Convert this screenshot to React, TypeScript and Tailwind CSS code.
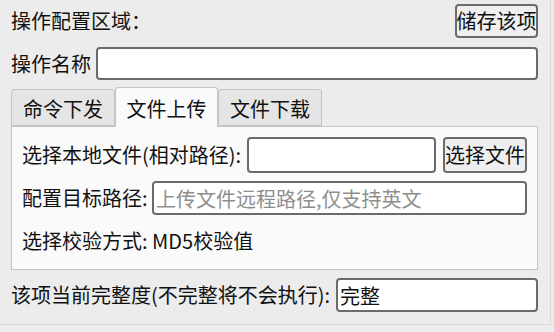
import { useState } from 'react'

const inputBase =
  'min-w-0 shrink-0 rounded-[4px] border-2 border-[#6b6b6b] bg-white px-[2px] text-[20px] text-[#111] outline-none placeholder:text-[#8e8e8e]'

const buttonBase =
  'flex shrink-0 items-center justify-center whitespace-nowrap rounded-[4px] border-2 border-[#6b6b6b] bg-[#efefef] text-[20px] leading-none text-[#111]'

const tabs = ['命令下发', '文件上传', '文件下载']

export default function App() {
  const [active, setActive] = useState(1)

  return (
    <div className="h-[332px] w-[554px] overflow-hidden whitespace-nowrap bg-[#ececec] font-['Noto_Sans_CJK_SC','Noto_Sans',sans-serif] text-[20px] text-[#111]">
      <div className="flex h-[325px] w-[551px] flex-col border-r border-b border-[#d8d8d8] pt-[4px] pr-[12px] pl-[11px]">
        <div className="flex h-[34px] items-center justify-between">
          <span className="leading-none">操作配置区域：</span>
          <button className={`${buttonBase} h-[34px] w-[83px]`}>储存该项</button>
        </div>

        <div className="mt-[9px] flex h-[33px] items-center justify-between">
          <span className="leading-none">操作名称</span>
          <input className={`${inputBase} h-[33px] w-[442px]`} />
        </div>

        <div className="mt-[7px] flex h-[39px] items-end">
          {tabs.map((tab, i) =>
            i === active ? (
              <button
                key={tab}
                onClick={() => setActive(i)}
                className="relative z-10 -mb-px flex h-[40px] w-[103px] items-center justify-center rounded-t-[3px] border border-b-0 border-[#c4c4c4] bg-[#fafafa] pt-[3px] leading-none"
              >
                {tab}
              </button>
            ) : (
              <button
                key={tab}
                onClick={() => setActive(i)}
                className="flex h-[37px] w-[104px] items-center justify-center rounded-t-[3px] border border-[#c4c4c4] bg-[#e5e5e5] pt-[3px] leading-none"
              >
                {tab}
              </button>
            )
          )}
        </div>

        <div className="flex h-[144px] flex-col border border-[#c4c4c4] bg-[#fafafa] px-[10px] pt-[10px]">
          <div className="flex h-[36px] items-center justify-between">
            <span className="leading-none">选择本地文件(相对路径):</span>
            <div className="flex items-center gap-[7px]">
              <input className={`${inputBase} h-[36px] w-[189px]`} />
              <button className={`${buttonBase} h-[36px] w-[84px]`}>选择文件</button>
            </div>
          </div>

          <div className="mt-[8px] flex h-[34px] items-center justify-between">
            <span className="leading-none">配置目标路径:</span>
            <input
              className={`${inputBase} h-[34px] w-[375px]`}
              placeholder="上传文件远程路径,仅支持英文"
            />
          </div>

          <div className="mt-[9px] flex h-[34px] items-center">
            <span className="leading-none">选择校验方式: MD5校验值</span>
          </div>
        </div>

        <div className="mt-[8px] flex h-[34px] items-center justify-between">
          <span className="leading-none">该项当前完整度(不完整将不会执行):</span>
          <input className={`${inputBase} h-[34px] w-[202px]`} defaultValue="完整" />
        </div>
      </div>
    </div>
  )
}
